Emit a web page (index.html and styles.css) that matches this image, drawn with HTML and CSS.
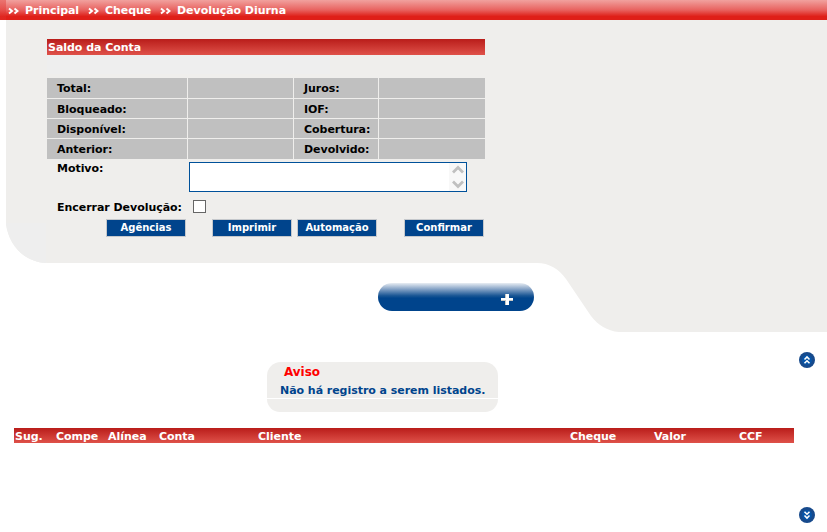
FILE: index.html
```html
<!DOCTYPE html>
<html lang="pt-BR">
<head>
<meta charset="utf-8">
<title>Devolução Diurna</title>
<link rel="stylesheet" href="styles.css">
</head>
<body>
<svg class="backdrop" width="827" height="532" viewBox="0 0 827 532">
  <path fill="#efeeec" d="M6 20H827V332H619C607 331 598 325 591 316L566 279C559 269 549 263 537 263H48C25 263 9 246 6 224Z"/>
  <path fill="#eeeeee" d="M6 223H46V263C25 262 9 246 6 224Z"/>
  <path fill="#eeeeee" d="M47 55H330V74H47Z"/>
</svg>
<nav class="crumbs">
  <svg class="arrows" width="12" height="8" viewBox="0 0 12 8"><path d="M1 1.500l3 2.500L1 6.500M6.500 1.500l3 2.500-3 2.500"/></svg><span class="c1">Principal</span>
  <svg class="arrows" width="12" height="8" viewBox="0 0 12 8"><path d="M1 1.500l3 2.500L1 6.500M6.500 1.500l3 2.500-3 2.500"/></svg><span class="c2">Cheque</span>
  <svg class="arrows" width="12" height="8" viewBox="0 0 12 8"><path d="M1 1.500l3 2.500L1 6.500M6.500 1.500l3 2.500-3 2.500"/></svg><span class="c3">Devolução Diurna</span>
</nav>
<main>
  <section class="account">
    <h1 class="bar">Saldo da Conta</h1>
    <div class="balances">
      <div>Total:</div><div></div><div>Juros:</div><div></div>
      <div>Bloqueado:</div><div></div><div>IOF:</div><div></div>
      <div>Disponível:</div><div></div><div>Cobertura:</div><div></div>
      <div>Anterior:</div><div></div><div>Devolvido:</div><div></div>
    </div>
    <div class="reason">
      <span class="label">Motivo:</span>
      <div class="textbox">
        <div class="scroll">
          <svg width="12" height="9" viewBox="0 0 12 9"><path d="M1 7.500L6 2.500l5 5"/></svg>
          <svg width="12" height="9" viewBox="0 0 12 9"><path d="M1 1.500l5 5 5-5"/></svg>
        </div>
      </div>
    </div>
    <div class="closing"><span class="label">Encerrar Devolução:</span><span class="check"></span></div>
    <div class="buttons">
      <button>Agências</button><button>Imprimir</button><button>Automação</button><button>Confirmar</button>
    </div>
  </section>
  <div class="pill"><svg width="13" height="12" viewBox="0 0 13 12"><path fill="#c9c9c4" d="M4 0h4v4h4v3H8v4H4V7H0V4h4z"/><path fill="#fff" d="M5 0h3v4h4v2H8v5H5V6H0V4h5z"/></svg></div>
  <div class="middle">
    <div class="notice">
      <div class="notice-top"><h2>Aviso</h2><p>Não há registro a serem listados.</p></div>
      <div class="notice-bottom"></div>
    </div>
    <svg class="round" width="16" height="16" viewBox="0 0 16 16"><circle cx="8" cy="8" r="8" fill="#174a8c"/><circle cx="8" cy="8" r="5" fill="#0755a8"/><path class="mark" d="M5.500 7.500L8 5l2.500 2.500M5.500 11.300L8 8.800l2.500 2.500"/></svg>
  </div>
  <div class="bar listing">
    <span>Sug.</span><span>Compe</span><span>Alínea</span><span>Conta</span><span>Cliente</span><span>Cheque</span><span>Valor</span><span>CCF</span>
  </div>
  <svg class="round down" width="16" height="16" viewBox="0 0 16 16"><circle cx="8" cy="8" r="8" fill="#174a8c"/><circle cx="8" cy="8" r="5" fill="#0755a8"/><path class="mark" d="M5.500 4.700L8 7.200l2.500-2.500M5.500 8.500L8 11l2.500-2.500"/></svg>
</main>
</body>
</html>
```
FILE: styles.css
```css
* { box-sizing: border-box; }
body { margin: 0; width: 827px; height: 532px; overflow: hidden; background: #fff; font: bold 11px/14px "DejaVu Sans", sans-serif; letter-spacing: -.04px; color: #000; }
svg { display: block; flex: none; }
h1, h2, p { margin: 0; font-size: inherit; }
.backdrop { position: absolute; left: 0; top: 0; z-index: -1; }
.crumbs { display: flex; align-items: center; height: 20px; padding: 1px 0 0 8px; color: #fff; background: linear-gradient(90deg, rgba(225,50,45,.4) 6px, transparent 6px), linear-gradient(#f1a19e, #e8625f 50%, #df1f18 82%, #df1f18); }
.arrows { margin-right: 5px; fill: none; stroke: #fff; stroke-width: 1.9; }
.c1 { width: 63px; }
.c2 { width: 55px; }
.account { width: 438px; margin: 19px 0 0 47px; }
.bar { color: #fff; background: linear-gradient(#b91d1a, #df5149); }
h1.bar { height: 16px; line-height: 18px; padding-left: 1px; }
.balances { display: grid; grid-template: 20px 19px 19px 20px / 140px 105px 84px 106px; gap: 1px; margin-top: 23px; }
.balances div { background: #c0c0c0; padding-left: 10px; line-height: 22px; white-space: nowrap; overflow: hidden; }
.reason { display: flex; height: 33px; padding-top: 3px; }
.label { width: 132px; margin-left: 10px; white-space: nowrap; }
.textbox { width: 278px; height: 30px; border: 1px solid #00519a; background: #fff; display: flex; justify-content: flex-end; }
.scroll { width: 17px; background: #f8f8f8; padding: 2px 0 2px 3px; display: flex; flex-direction: column; justify-content: space-between; fill: none; stroke: #c0c0c0; stroke-width: 2.7; }
.closing { display: flex; align-items: flex-start; height: 14px; margin-top: 8px; }
.closing .label { line-height: 16px; }
.check { width: 13px; height: 13px; margin-left: 4px; border: 1px solid #666; background: #fff; }
.buttons { display: flex; padding-left: 59px; margin-top: 5px; }
button { width: 80px; height: 18px; padding: 0 0 1px; border: 1px solid #c5c8cc; background: #00448c; color: #fff; font: bold 10px/14px "DejaVu Sans", sans-serif; }
button:nth-child(2) { margin-left: 26px; }
button:nth-child(3) { margin-left: 5px; }
button:nth-child(4) { margin-left: 27px; }
.pill { display: flex; width: 156px; height: 28px; margin: 46px 0 0 378px; padding: 11px 0 0 123px; border-radius: 14px; background: linear-gradient(#e8edf3, #7798bf 25%, #1b5795 45%, #00448c 54%); }
.middle { display: flex; justify-content: space-between; height: 66px; margin-top: 41px; padding: 0 12px 0 267px; }
.notice { width: 231px; margin-top: 10px; }
.notice-top { height: 36px; padding: 2px 0 0 13px; background: #efeeec; border-radius: 14px 14px 0 0; }
.notice-bottom { height: 13px; margin-top: 1px; background: #efeeec; border-radius: 0 0 14px 14px; }
h2 { padding-left: 4px; font-size: 12px; line-height: 16px; color: #f00; }
.notice p { line-height: 22px; color: #00448c; white-space: nowrap; }
.mark { fill: none; stroke: #fff; stroke-width: 1.6; }
.listing { display: grid; grid-template-columns: 41px 52px 51px 99px 312px 84px 85px 1fr; width: 780px; height: 15px; margin: 10px 0 0 14px; padding-left: 1px; line-height: 18px; }
.down { margin: 64px 0 0 799px; }
```
